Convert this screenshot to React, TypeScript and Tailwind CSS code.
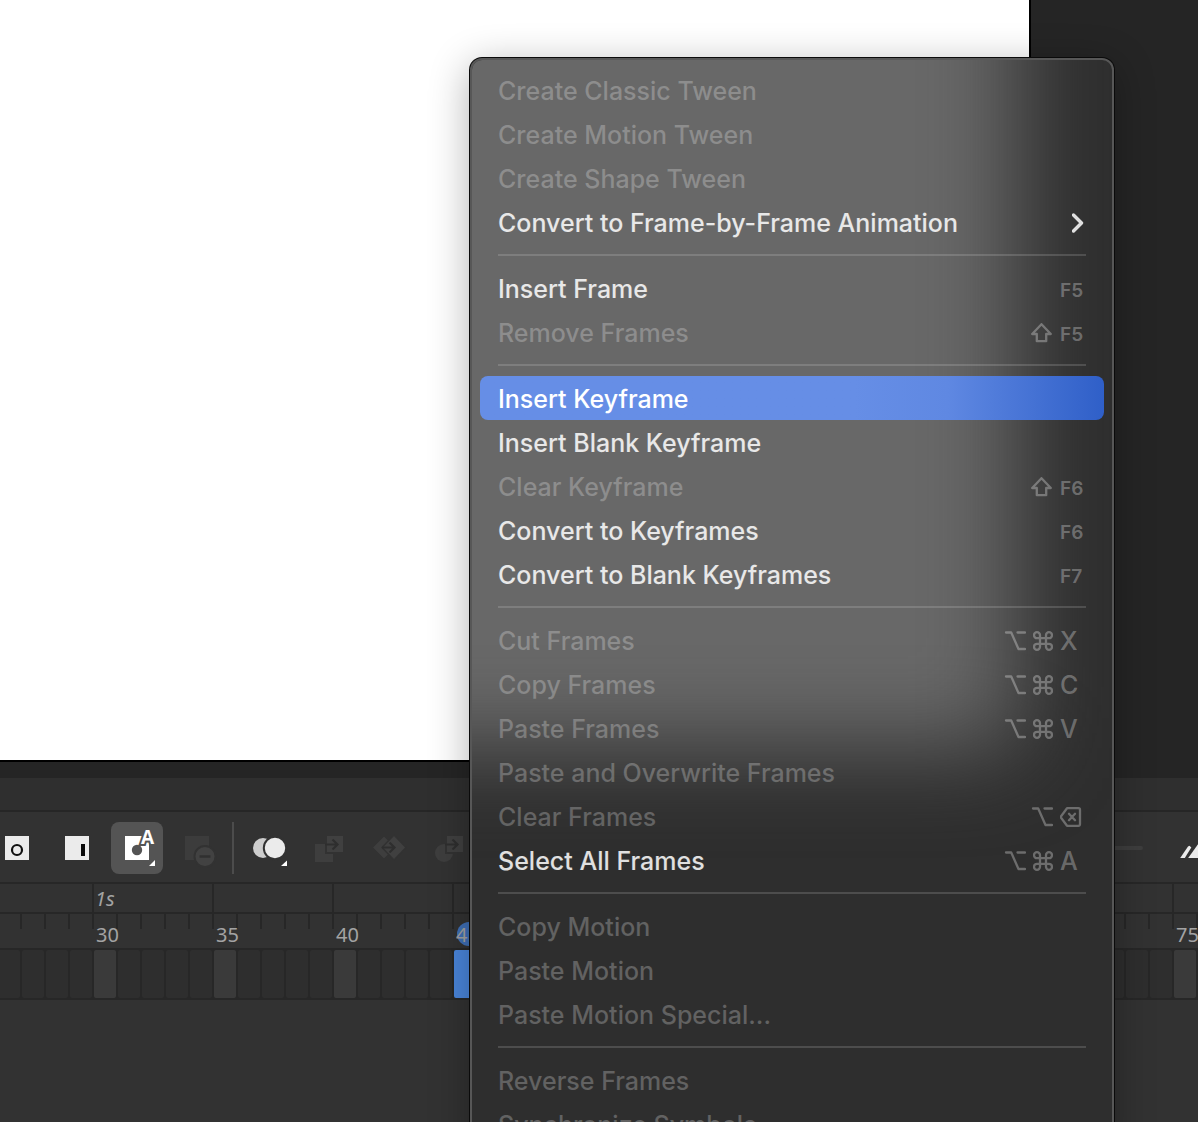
import type { ReactNode } from 'react';

type Key = 'option' | 'command' | 'shift' | 'delete';

interface Item {
  label: string;
  disabled?: boolean;
  active?: boolean;
  submenu?: boolean;
  keys?: Key[];
  letter?: string;
}

const menu: Item[][] = [
  [
    { label: 'Create Classic Tween', disabled: true },
    { label: 'Create Motion Tween', disabled: true },
    { label: 'Create Shape Tween', disabled: true },
    { label: 'Convert to Frame-by-Frame Animation', submenu: true },
  ],
  [
    { label: 'Insert Frame', letter: 'F5' },
    { label: 'Remove Frames', disabled: true, keys: ['shift'], letter: 'F5' },
  ],
  [
    { label: 'Insert Keyframe', active: true },
    { label: 'Insert Blank Keyframe' },
    { label: 'Clear Keyframe', disabled: true, keys: ['shift'], letter: 'F6' },
    { label: 'Convert to Keyframes', letter: 'F6' },
    { label: 'Convert to Blank Keyframes', letter: 'F7' },
  ],
  [
    { label: 'Cut Frames', disabled: true, keys: ['option', 'command'], letter: 'X' },
    { label: 'Copy Frames', disabled: true, keys: ['option', 'command'], letter: 'C' },
    { label: 'Paste Frames', disabled: true, keys: ['option', 'command'], letter: 'V' },
    { label: 'Paste and Overwrite Frames', disabled: true },
    { label: 'Clear Frames', disabled: true, keys: ['option', 'delete'] },
    { label: 'Select All Frames', keys: ['option', 'command'], letter: 'A' },
  ],
  [
    { label: 'Copy Motion', disabled: true },
    { label: 'Paste Motion', disabled: true },
    { label: 'Paste Motion Special...', disabled: true },
  ],
  [
    { label: 'Reverse Frames', disabled: true },
    { label: 'Synchronize Symbols', disabled: true },
  ],
];

// Timeline: groups of five frames, from frame 25 on
const groups = Array.from({ length: 11 }, (_, i) => 25 + i * 5);
const frames = Array.from({ length: 55 }, (_, i) => 25 + i);
const labelled = [30, 35, 40, 45, 75];
const currentFrame = 45;

function KeyIcon({ name }: { name: Key }) {
  const props = { fill: 'none', stroke: 'currentColor', strokeWidth: 2.3, strokeLinecap: 'round', strokeLinejoin: 'round' } as const;
  if (name === 'option') {
    return (
      <svg className="w-[22px] h-5" viewBox="0 0 22 20" {...props}>
        <path d="M2 1.5h5.2L14.500 18h6.500M13.500 1.500h7.500" />
      </svg>
    );
  }
  if (name === 'command') {
    return (
      <svg className="w-5 h-5" viewBox="0 0 20 20" {...props}>
        <path d="M7 4.200v11.600a3 3 0 1 1-3-3h12a3 3 0 1 1-3 3V4.200a3 3 0 1 1 3 3H4a3 3 0 1 1 3-3z" />
      </svg>
    );
  }
  if (name === 'shift') {
    return (
      <svg className="w-[22px] h-5" viewBox="0 0 22 20" {...props}>
        <path d="M10.500 1.200L1.200 11h4.600V18.200h9.400V11h4.600z" />
      </svg>
    );
  }
  return (
    <svg className="w-6 h-5" viewBox="0 0 24 20" {...props}>
      <path d="M7 1.200h11.500a1.500 1.500 0 0 1 1.500 1.500v14.600a1.500 1.500 0 0 1-1.500 1.500H7L0.500 10zM9 6.800l6 6.400M15 6.800l-6 6.400" />
    </svg>
  );
}

function MenuItem({ item }: { item: Item }) {
  const tone = item.disabled ? 'text-white/25' : item.active ? 'text-white' : 'text-white/85';
  const bg = item.active ? 'bg-linear-to-r from-[#668ee6] from-60% via-[#5f88e2] via-75% to-[#2f5fc8]' : '';
  return (
    <button
      type="button"
      role="menuitem"
      disabled={item.disabled}
      className={`flex h-11 w-full items-center justify-between rounded-lg pt-px pr-5 pl-[18px] text-left ${tone} ${bg}`}
    >
      <span className="whitespace-nowrap">{item.label}</span>
      {item.submenu && (
        <svg className="w-3 h-5" viewBox="0 0 12 20" fill="none" stroke="currentColor" strokeWidth="3.4" strokeLinecap="round" strokeLinejoin="round">
          <path d="M1.500 2l8 8-8 8" />
        </svg>
      )}
      {(item.keys || item.letter) && (
        <span className="flex items-center gap-[7px] text-white/30">
          {item.keys?.map((key) => <KeyIcon key={key} name={key} />)}
          {item.letter && (
            <span className={item.letter.length > 1 ? 'w-6 pt-1 text-[19px] leading-5 font-semibold' : 'w-6 text-[25px] leading-6'}>
              {item.letter}
            </span>
          )}
        </span>
      )}
    </button>
  );
}

function ContextMenu() {
  return (
    <div
      role="menu"
      className="absolute top-[58px] right-[84px] w-[644px] overflow-hidden rounded-xl border-2 border-white/20 bg-[#2e2e2e] bg-clip-border px-2 py-2 font-['Inter',sans-serif] text-[25px] leading-8 font-medium shadow-[0_0_0_1px_#0a0a0a,0_8px_40px_rgba(0,0,0,0.32)]"
    >
      {/* light of the canvas coming through the menu */}
      <div className="absolute -top-48 -left-48 h-[880px] w-[738px] bg-[#686868] blur-[46px]" />
      <div className="relative">
        {menu.map((section, i) => (
          <div key={i}>
            {i > 0 && (
              <div className="flex h-[22px] items-center px-[18px]">
                <hr className="h-0.5 w-full border-0 bg-white/15" />
              </div>
            )}
            {section.map((item) => <MenuItem key={item.label} item={item} />)}
          </div>
        ))}
      </div>
    </div>
  );
}

function Tool({ label, active, children }: { label: string; active?: boolean; children: ReactNode }) {
  return (
    <button type="button" aria-label={label} className={`size-[52px] shrink-0 rounded-lg ${active ? 'bg-[#545454]' : ''}`}>
      <svg className="size-[52px]" viewBox="0 0 52 52">{children}</svg>
    </button>
  );
}

function Toolbar() {
  return (
    <div className="-ml-[9px] flex h-[70px] items-start gap-2 pt-2.5">
      <Tool label="Insert blank keyframe">
        <rect x="14" y="14" width="24" height="24" fill="#ebebeb" />
        <circle cx="26" cy="28" r="5" fill="none" stroke="#111" strokeWidth="2.2" />
      </Tool>
      <Tool label="Insert frame">
        <rect x="14" y="14" width="24" height="24" fill="#ebebeb" />
        <rect x="30" y="22" width="4" height="12" fill="#0a0a0a" />
      </Tool>
      <Tool label="Auto keyframe" active>
        <rect x="14" y="14" width="24" height="24" fill="#fff" />
        <circle cx="26" cy="28" r="5.2" fill="#545454" />
        <text x="36.5" y="21.5" textAnchor="middle" fontFamily="Open Sans" fontSize="19" fontWeight="700" fill="#fff" stroke="#545454" strokeWidth="4" paintOrder="stroke">A</text>
        <path d="M44 38v6h-6z" fill="#fff" />
      </Tool>
      <Tool label="Remove frame">
        <rect x="14" y="14" width="24" height="24" fill="#3c3c3c" />
        <circle cx="34" cy="34.5" r="10.5" fill="#424242" stroke="#323232" strokeWidth="2" />
        <path d="M28.5 34.5h11" stroke="#303030" strokeWidth="2.5" />
      </Tool>
      <div className="mx-px h-[52px] w-0.5 shrink-0 bg-[#4c4c4c]" />
      <Tool label="Onion skin">
        <circle cx="20" cy="26" r="10" fill="#cdcdcd" />
        <circle cx="32" cy="26" r="11.2" fill="#ebebeb" stroke="#323232" strokeWidth="2" />
        <path d="M44 38.5V44h-6z" fill="#fff" />
      </Tool>
      <Tool label="Create classic tween">
        <rect x="12" y="22" width="18" height="18" fill="#3e3e3e" />
        <rect x="23" y="13" width="18" height="18" fill="#404040" stroke="#323232" strokeWidth="2" />
        <path d="M22 22.5h12M29.5 17.5l5 5-5 5" fill="none" stroke="#2e2e2e" strokeWidth="2.2" />
      </Tool>
      <Tool label="Create motion tween">
        <path d="M21 14.5l11 11-11 11-11-11z" fill="#3e3e3e" />
        <path d="M31 13l12 12.5L31 38 19 25.5z" fill="#404040" stroke="#323232" strokeWidth="1.5" />
        <path d="M19 25.5h12M26.5 20.5l5 5-5 5" fill="none" stroke="#2e2e2e" strokeWidth="2.2" />
      </Tool>
      <Tool label="Create shape tween">
        <circle cx="21" cy="31" r="9" fill="#3e3e3e" />
        <rect x="23" y="13" width="18" height="18" fill="#404040" stroke="#323232" strokeWidth="2" />
        <path d="M22 22.5h12M29.5 17.5l5 5-5 5" fill="none" stroke="#2e2e2e" strokeWidth="2.2" />
      </Tool>
      <div className="-mr-[26px] ml-auto flex shrink-0 items-center gap-[29px]">
        <input type="range" aria-label="Zoom" defaultValue={0} disabled className="h-1 w-32 appearance-none rounded-full bg-[#3e3e3e]" />
        <Tool label="Larger frames">
          <path d="M8.2 36l7.8-11.500 1.500-.800 1.800 1.800L12.800 36z" fill="#ebebeb" />
          <path d="M16.200 36L26 22.300 36 36z" fill="#ebebeb" />
        </Tool>
      </div>
    </div>
  );
}

function Timeline() {
  return (
    <div className="h-[344px] shrink-0 bg-[#323232] font-['Noto_Sans',sans-serif] text-[20px] text-[#a3a3a3]">
      <div className="h-[34px] border-b-2 border-[#262626] bg-[#2f2f2f]" />
      <Toolbar />

      {/* seconds */}
      <div className="-mr-8 -ml-7 flex h-8 overflow-hidden border-y-2 border-[#272727]">
        {groups.map((n) => (
          <div key={n} className="w-[120px] shrink-0 border-l-2 border-[#272727] pl-px leading-[30px] italic">
            {n === 30 && '1s'}
          </div>
        ))}
      </div>

      {/* frame numbers */}
      <div className="-mr-8 -ml-7 flex h-[34px] overflow-hidden">
        {groups.map((n) => (
          <div key={n} className="relative w-[120px] shrink-0">
            <div className="flex h-[15px]">
              {[0, 1, 2, 3, 4].map((t) => <div key={t} className="w-6 border-l-2 border-[#272727]" />)}
            </div>
            {n === currentFrame && <div className="absolute top-2 left-[5px] size-6 rounded-full bg-[#3f70b8]" />}
            {labelled.includes(n) && <div className="relative pl-1 leading-3">{n}</div>}
          </div>
        ))}
      </div>

      {/* frames */}
      <div className="-mr-8 -ml-7 flex h-[52px] gap-0.5 overflow-hidden border-y-2 border-[#272727] bg-[#272727] pl-0.5">
        {frames.map((n) => (
          <div
            key={n}
            className={`w-[22px] shrink-0 rounded-xs ${n === currentFrame ? 'bg-[#4a86dc]' : n % 5 === 0 ? 'bg-[#3a3a3a]' : 'bg-[#2e2e2e]'}`}
          />
        ))}
      </div>
    </div>
  );
}

export default function App() {
  return (
    <main className="relative flex h-screen flex-col overflow-hidden bg-[#252525]">
      <div className="flex-1 pr-[167px] pb-4">
        <div className="h-full border-r-2 border-b-2 border-black bg-white" />
      </div>
      <Timeline />
      <ContextMenu />
    </main>
  );
}
